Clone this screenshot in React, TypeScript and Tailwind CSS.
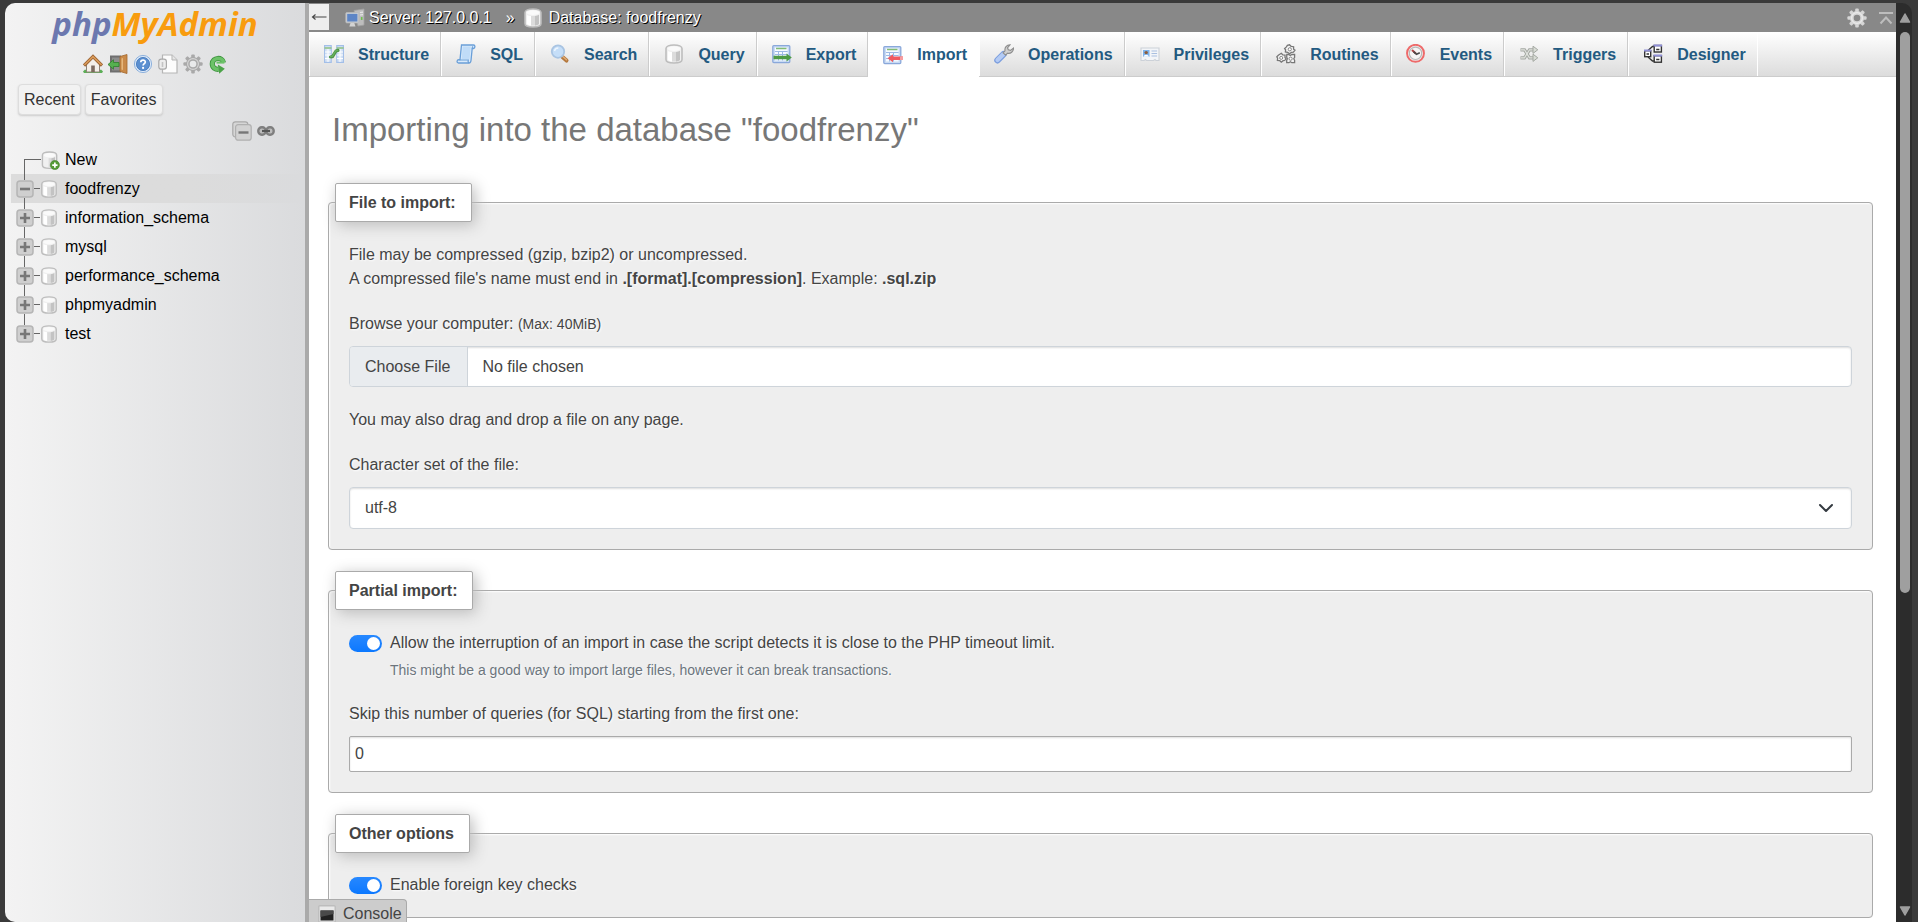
import type { ReactNode } from "react";

type IconProps = { className?: string };

function Svg({ className = "size-5", children }: { className?: string; children: ReactNode }) {
  return (
    <svg viewBox="0 0 20 20" className={`shrink-0 ${className}`} fill="none" aria-hidden="true">
      {children}
    </svg>
  );
}

function DatabaseIcon({ className }: IconProps) {
  return (
    <Svg className={className}>
      <path d="M2 4.500v11c0 2.200 3.400 3.500 8 3.500s8-1.300 8-3.500v-11C18 2.200 14.600 1 10 1S2 2.200 2 4.500z" fill="#f0f0f0" stroke="#bdbdbd" strokeWidth="1.600" />
      <path d="M4 7v9c1 .9 2.300 1.300 4 1.400V8.100C6.500 8 5 7.600 4 7z" fill="#fff" />
      <path d="M8 8v9.500h5.500V8z" fill="#dcdcdc" />
      <path d="M12 8v9.500c1.800-.2 3.400-.7 4-1.500V6.800c-1 .7-2.400 1.100-4 1.200z" fill="#c3c3c3" />
      <ellipse cx="10" cy="4.600" rx="6.400" ry="2.300" fill="#fafafa" />
    </Svg>
  );
}

function NewDatabaseIcon({ className }: IconProps) {
  return (
    <svg viewBox="0 0 20 20" className={`shrink-0 ${className}`} fill="none" aria-hidden="true">
      <path d="M1.500 4.300V15c0 2.200 3.200 3.300 7.500 3.300s7.500-1.100 7.500-3.300V4.300C16.500 2.100 13.300 1 9 1S1.500 2.100 1.500 4.300z" fill="#f0f0f0" stroke="#bdbdbd" strokeWidth="1.500" />
      <path d="M8 7.500v9.500h3.500V7.500z" fill="#dcdcdc" />
      <path d="M11 7.500v9.500c1.800-.2 3.200-.7 3.800-1.500V6.300c-.9.700-2.200 1.100-3.800 1.200z" fill="#c3c3c3" />
      <ellipse cx="9" cy="4.400" rx="6" ry="2.200" fill="#fafafa" />
      <circle cx="14.600" cy="14.800" r="4.800" fill="#559a36" stroke="#3f7d26" strokeWidth=".6" />
      <path d="M14.600 12v5.600M11.800 14.800h5.600" stroke="#fff" strokeWidth="1.800" />
    </svg>
  );
}

function GearIcon({ className, fill = "#a9a9a9", hole = "#e9eaeb" }: IconProps & { fill?: string; hole?: string }) {
  return (
    <Svg className={className}>
      <g fill={fill}>
        <rect x="8.200" y=".4" width="3.600" height="19.200" rx="1" />
        <rect x="8.200" y=".4" width="3.600" height="19.200" rx="1" transform="rotate(45 10 10)" />
        <rect x="8.200" y=".4" width="3.600" height="19.200" rx="1" transform="rotate(90 10 10)" />
        <rect x="8.200" y=".4" width="3.600" height="19.200" rx="1" transform="rotate(135 10 10)" />
        <circle cx="10" cy="10" r="7" />
      </g>
      <circle cx="10" cy="10" r="5.400" stroke="#fff" strokeOpacity=".5" strokeWidth="1.200" />
      <circle cx="10" cy="10" r="3.300" fill={hole} />
    </Svg>
  );
}

function HomeIcon() {
  return (
    <Svg>
      <path d="M0 17.500l2-2 3 1.500h10l3-1.500 2 2-1 1.500H1z" fill="#5cae57" />
      <path d="M3.500 9.500L10 4l6.500 5.500V18h-13z" fill="#f4efe9" stroke="#8f8378" strokeWidth="1" />
      <path d="M1 11.500L10 2.600l9 8.900" stroke="#9a6233" strokeWidth="3.200" />
      <path d="M1.400 11L10 2.600l8.600 8.400" stroke="#d99a58" strokeWidth="1.600" />
      <path d="M8.200 11.500h3.600V18H8.200z" fill="#7d6b60" />
    </Svg>
  );
}

function ExitIcon() {
  return (
    <Svg>
      <path d="M2 1.500h11v17H2z" fill="#6f6f6f" />
      <path d="M4 3.500h9v13H4z" fill="#8d8d8d" />
      <path d="M12 2.500L19 .5v19l-7-2z" fill="#c98a49" stroke="#a3672c" strokeWidth=".8" />
      <path d="M13.500 4.500l1.500-.5v12l-1.500-.4z" fill="#e6b77c" />
      <path d="M0 10.500L5.500 5.800v2.700H11v4H5.500v2.700z" fill="#55b04f" stroke="#2e7f2c" strokeWidth=".8" />
    </Svg>
  );
}

function HelpIcon() {
  return (
    <Svg>
      <circle cx="10" cy="10" r="8.600" fill="#dbe8f7" stroke="#8fb2dd" strokeWidth="1" />
      <circle cx="10" cy="10" r="6.600" fill="#5b8fd0" stroke="#3e74b9" strokeWidth=".8" />
      <path d="M7.800 8.200C7.800 5.400 12.400 5.500 12.300 8c0 1.700-2.200 1.700-2.200 3.600" stroke="#fff" strokeWidth="1.700" />
      <circle cx="10.100" cy="13.900" r="1.100" fill="#fff" />
    </Svg>
  );
}

function DocsIcon() {
  return (
    <Svg>
      <path d="M4.500 1h9.500l5 5v13H4.500z" fill="#fcfcfc" stroke="#b5b5b5" strokeWidth="1.200" />
      <path d="M14 1v5h5" fill="#e6e6e6" stroke="#b5b5b5" strokeWidth="1" />
      <rect x=".8" y="5.200" width="7.600" height="10" rx="2.400" fill="#ededed" stroke="#aaa" strokeWidth="1.200" />
      <path d="M4.500 8v5" stroke="#c3c3c3" strokeWidth="1.600" />
    </Svg>
  );
}

function ReloadIcon() {
  return (
    <Svg>
      <path d="M15.500 8.500C14.800 2.800 4.300 3 4.300 10c0 3.700 3.200 5.500 6.200 5.300" stroke="#3f9440" strokeWidth="5.200" />
      <path d="M15.500 8.300C14.800 2.800 4.300 3 4.300 10c0 3.700 3.200 5.500 6.200 5.300" stroke="#6cc268" strokeWidth="3.600" />
      <path d="M9.800 10.500l7 4.200-5.600 5z" fill="#4ba348" />
      <path d="M8.500 8.600h7.900" stroke="#6cc268" strokeWidth="2" />
    </Svg>
  );
}

function CollapseAllIcon() {
  return (
    <Svg>
      <rect x=".8" y=".8" width="15" height="15" rx="2.500" fill="#d6d6d6" stroke="#a9a9a9" strokeWidth="1.200" />
      <rect x="3.600" y="3.600" width="15.600" height="15.600" rx="2.500" fill="#d2d2d2" stroke="#b0b0b0" strokeWidth="1.200" />
      <path d="M6.500 11.500h10" stroke="#777" strokeWidth="2.400" />
    </Svg>
  );
}

function LinkIcon() {
  return (
    <svg viewBox="0 0 18 10" className="h-[10px] w-[18px]" fill="none" aria-hidden="true">
      <rect x="1.300" y="1.300" width="7.400" height="7.400" rx="3.400" fill="#bdbdbd" stroke="#7f7f7f" strokeWidth="2.400" />
      <rect x="9.300" y="1.300" width="7.400" height="7.400" rx="3.400" fill="#bdbdbd" stroke="#7f7f7f" strokeWidth="2.400" />
      <path d="M5 5h8" stroke="#555" strokeWidth="2.200" />
    </svg>
  );
}

function ServerIcon() {
  return (
    <Svg>
      <path d="M9 2.500L19 1v16l-6 1z" fill="#bdbdbd" stroke="#a2a2a2" strokeWidth=".8" />
      <path d="M15 4.500l3-.4M15 7l3-.3" stroke="#e8e8e8" strokeWidth="1.200" />
      <path d="M16.700 9v3" stroke="#6fc04f" strokeWidth="1.600" />
      <rect x=".8" y="4.500" width="13" height="10.400" rx="1" fill="#c9cdd3" stroke="#b7b7b7" strokeWidth=".8" />
      <rect x="2.200" y="5.900" width="10.200" height="7.600" fill="#5d85c6" />
      <path d="M5.500 15h3.800l1.200 3.500H4.300z" fill="#d3d3d3" />
    </Svg>
  );
}

function StructureIcon() {
  return (
    <Svg>
      <rect x=".6" y="1.600" width="6.600" height="16.800" fill="#d5e3f5" stroke="#a3bfe8" strokeWidth="1.200" />
      <rect x="12.800" y="1.600" width="6.600" height="16.800" fill="#d5e3f5" stroke="#a3bfe8" strokeWidth="1.200" />
      <path d="M.5 4h7M12.600 4h7" stroke="#8fc281" strokeWidth="1.600" />
      <path d="M1 8h6M1 11h6M1 14.500h6M13 8h6M13 11h6M13 14.500h6M4 5v13M16 5v13" stroke="#fff" strokeWidth="1" />
      <path d="M6.500 13l2-.4 3.500-5.600 2-.6" stroke="#4b9345" strokeWidth="3.200" strokeLinecap="round" />
      <path d="M6.500 12.700l1.800-.4 3.500-5.400 2-.6" stroke="#67b15d" strokeWidth="1.300" strokeLinecap="round" />
    </Svg>
  );
}

function SqlIcon() {
  return (
    <Svg>
      <path d="M5.500 1h12c1.800 0 2 3 0 3.500h-1.300L15 16.500c-.2 2-1 2.500-2 2.500H2.500c-2 0-2-3.400.5-3.400h1z" fill="#d9eafb" stroke="#6a9fd8" strokeWidth="1.300" />
      <path d="M6.800 2.500h8L13.500 15H5.600z" fill="#c0dcf8" />
      <path d="M2.500 16h9.800c-.4 1 0 2.500.7 3" stroke="#6a9fd8" strokeWidth="1.200" />
      <path d="M16.200 4.500l.4-2.200" stroke="#6a9fd8" />
    </Svg>
  );
}

function SearchIcon() {
  return (
    <Svg>
      <path d="M12.500 13l4 3.600" stroke="#b5793f" strokeWidth="4" strokeLinecap="round" />
      <path d="M13 12.700l3.500 3.100" stroke="#e0ae78" strokeWidth="1.400" strokeLinecap="round" />
      <circle cx="8" cy="7.600" r="6.200" fill="#c5def8" stroke="#a9c4e2" strokeWidth="1.800" />
      <path d="M4.500 7c.4-2 2-3 3.800-3" stroke="#eef6fe" strokeWidth="1.400" />
    </Svg>
  );
}

function SheetIcon() {
  return (
    <>
      <rect x=".8" y="1.600" width="17" height="17" rx="1" fill="#c9dbf4" stroke="#8aa8da" strokeWidth="1.300" />
      <path d="M3 3.500h12.600v13H3z" fill="#f6faff" />
      <path d="M4 4.500h10.500" stroke="#83bb74" strokeWidth="1.500" />
      <path d="M3 7.500h12.600M3 10.500h12.600M3 13.500h12.600M6.500 7v9.500M10.500 7v9.500" stroke="#9db9e4" strokeWidth="1" />
    </>
  );
}

function ExportIcon() {
  return (
    <Svg>
      <SheetIcon />
      <path d="M1.500 11.800h13V9.500l5.300 4-5.300 4v-2.300h-13z" fill="#4e9b45" />
    </Svg>
  );
}

function ImportIcon() {
  return (
    <Svg>
      <SheetIcon />
      <path d="M20 11.500h-10V9.200l-5.500 4.100 5.500 4v-2.300h10z" fill="#f05a5f" />
      <path d="M20 11.500h-3v3.500h3z" fill="#f79c9f" />
    </Svg>
  );
}

function WrenchIcon() {
  return (
    <Svg>
      <path d="M3.500 16.200l6-6" stroke="#7c9ede" strokeWidth="6.500" strokeLinecap="round" />
      <path d="M3.500 16l5.800-5.800" stroke="#b4cbf4" strokeWidth="4.200" strokeLinecap="round" />
      <path d="M9 8.800l2-2c-.6-3 1.600-6 5-6l-2.500 3 .8 2 2.200.6 3-2.400c.2 3.500-3 6-6 5.200l-1.800 2z" fill="#cfcfcf" stroke="#8d8d8d" strokeWidth="1.100" />
    </Svg>
  );
}

function PrivilegesIcon() {
  return (
    <Svg>
      <path d="M1 4h18v12.500h-3l-1-1-1.500 1h-7l-1-1-1.500 1H1z" fill="#f3f5f8" stroke="#ccd1d8" strokeWidth="1.100" />
      <rect x="3" y="6" width="6.500" height="6.800" fill="#7db2ea" />
      <circle cx="6.200" cy="8.600" r="1.700" fill="#8d5d3b" />
      <path d="M3.500 12.800c.4-2.800 5-2.800 5.400 0z" fill="#fff" />
      <path d="M11.500 7h5.600M11.500 9.500h5.600M11.500 12h5.600" stroke="#a9bfe0" strokeWidth="1.200" />
    </Svg>
  );
}

function RoutinesIcon() {
  return (
    <Svg>
      <g stroke="#777" strokeWidth="1.300" fill="#f3f3f3">
        <path d="M13.500 .8l1.600 1.500 2.500.4v2.500l1.400 1-1.600 2-2 .2-1.900 1.400-1.800-1.400-2.300-.4.200-2.200-1-1.300 1.800-1.600 1-1.500z" />
        <path d="M5.300 9.300l1.500 1.600 2.200.2v2.400l1 1.300-1.200 1.500-2 .6-1.500 1.300-1.500-1.500-2.400-.3.200-2.200-.8-1.400 1.500-1.500z" />
        <path d="M10.800 10.500h2l1.400 1 1.800-1h2.600v2.800l-.8 1.400.8 1.600v2.400h-2.800l-1.400-.9-1.500.9h-2.200v-2.500l.7-1.500-.7-1.500z" />
      </g>
      <g fill="#fff" stroke="#888">
        <circle cx="13.800" cy="5.300" r="1.600" />
        <circle cx="5.200" cy="13.900" r="1.500" />
        <circle cx="14.600" cy="14.700" r="1.600" />
      </g>
    </Svg>
  );
}

function EventsIcon() {
  return (
    <Svg>
      <circle cx="9.500" cy="9.300" r="8.500" fill="#ededed" stroke="#ee6a6a" strokeWidth="1.900" />
      <circle cx="9.500" cy="9.300" r="6.200" fill="#f6f6f6" stroke="#b9b9b9" strokeWidth="1.200" />
      <path d="M9.800 9.600L6 6" stroke="#b14141" strokeWidth="2" />
      <path d="M7.500 7.600l3 2.600 3.300-1.400" stroke="#4a4a4a" strokeWidth="1.700" />
    </Svg>
  );
}

function TriggersIcon() {
  return (
    <Svg>
      <g stroke="#a4a8a2" strokeWidth="3.200">
        <path d="M1.500 5.800h4l5 8h4.500" />
        <path d="M1.500 13.800h4l5-8h4.500" />
      </g>
      <g stroke="#dfe2dd" strokeWidth="1.200">
        <path d="M2 5.800h3.500l5 8h4.500" />
        <path d="M2 13.800h3.500l5-8h4.500" />
      </g>
      <path d="M14 2.200l4.800 3.600-4.800 3.600zM14 10.200l4.800 3.600-4.800 3.600z" fill="#d8dcd5" stroke="#a4a8a2" strokeWidth="1" />
    </Svg>
  );
}

function DesignerIcon() {
  return (
    <Svg>
      <path d="M5 6.500l4.500-4h3M5 13l4.500 4h3" stroke="#333" strokeWidth="1.300" />
      <g fill="#fff" stroke="#333" strokeWidth="1.400">
        <rect x="1.700" y="6.700" width="6" height="6" />
        <rect x="11.200" y="1.500" width="7.200" height="6.500" />
        <rect x="11.200" y="11.700" width="7.200" height="6.500" />
      </g>
      <path d="M1 6.600h7.400M10.500 1.600h8.600M10.500 11.600h8.600" stroke="#8f8fd6" strokeWidth="2" />
      <path d="M3.500 10h2.500M13.200 5.500h3.200M13.200 15.500h3.200" stroke="#333" strokeWidth="1.600" />
    </Svg>
  );
}

function ConsoleIcon() {
  return (
    <svg viewBox="0 0 18 18" className="size-[18px]" fill="none" aria-hidden="true">
      <rect x=".8" y=".8" width="16.400" height="16.400" rx="1" fill="#e9e9e9" stroke="#bdbdbd" strokeWidth="1.400" />
      <path d="M2.500 5.500h13v10h-13z" fill="#222" />
      <path d="M2.500 5.500h13v3.500L2.500 12z" fill="#4a4a4a" />
    </svg>
  );
}

const quickLinks = [
  { label: "Home", icon: <HomeIcon /> },
  { label: "Log out", icon: <ExitIcon /> },
  { label: "phpMyAdmin documentation", icon: <HelpIcon /> },
  { label: "Documentation", icon: <DocsIcon /> },
  { label: "Navigation panel settings", icon: <GearIcon /> },
  { label: "Reload navigation panel", icon: <ReloadIcon /> },
];

const databases = ["foodfrenzy", "information_schema", "mysql", "performance_schema", "phpmyadmin", "test"];

const tabs = [
  { label: "Structure", icon: <StructureIcon /> },
  { label: "SQL", icon: <SqlIcon /> },
  { label: "Search", icon: <SearchIcon /> },
  { label: "Query", icon: <DatabaseIcon className="size-5" /> },
  { label: "Export", icon: <ExportIcon /> },
  { label: "Import", icon: <ImportIcon /> },
  { label: "Operations", icon: <WrenchIcon /> },
  { label: "Privileges", icon: <PrivilegesIcon /> },
  { label: "Routines", icon: <RoutinesIcon /> },
  { label: "Events", icon: <EventsIcon /> },
  { label: "Triggers", icon: <TriggersIcon /> },
  { label: "Designer", icon: <DesignerIcon /> },
];

function Sidebar() {
  return (
    <aside className="flex w-[304px] shrink-0 flex-col rounded-l-[10px] border-r-4 border-[#aaa] bg-linear-to-r from-[#f3f3f3] to-[#dadbdd]">
      <a href="#home" className="mt-[2px] self-center font-['Open_Sans',sans-serif] text-[33px] leading-[38px] font-bold italic">
        <span className="text-[#6c78af]">php</span>
        <span className="text-[#f89c0e]">MyAdmin</span>
      </a>
      <nav aria-label="Shortcuts" className="mt-[11px] flex gap-[5px] pl-[78px]">
        {quickLinks.map((link) => (
          <a key={link.label} href="#nav" aria-label={link.label}>
            {link.icon}
          </a>
        ))}
      </nav>
      <div className="mt-[10px] flex gap-1 pl-[13px]">
        {["Recent", "Favorites"].map((label) => (
          <button
            key={label}
            type="button"
            className="h-[31px] rounded-sm border border-[#ddd] bg-[#f2f2f2] px-[5px] text-[#333] shadow-[0_1px_2px_#ccc]"
          >
            {label}
          </button>
        ))}
      </div>
      <div className="mt-[6px] mr-[30px] flex items-center justify-end gap-[5px]">
        <button type="button" aria-label="Collapse all">
          <CollapseAllIcon />
        </button>
        <button type="button" aria-label="Unlink from main panel">
          <LinkIcon />
        </button>
      </div>
      <ul className="mt-[5px] text-black">
        <li className="flex h-7 items-center pl-[19px]">
          <span className="mt-[13px] h-4 w-[17px] shrink-0 border-t border-l border-[#666]" />
          <NewDatabaseIcon className="size-[19px]" />
          <a href="#new" className="ml-[5px]">
            New
          </a>
        </li>
        {databases.map((name, index) => (
          <li
            key={name}
            className={`ml-[6px] flex h-[29px] items-center pl-[5px] ${index === 0 ? "bg-linear-to-r from-[#dcdcdc] from-60% to-[#dadbdd]" : ""}`}
          >
            <span className="flex h-full w-[18px] shrink-0 flex-col items-center">
              <span className="mr-px w-px flex-1 bg-[#666]" />
              <button type="button" aria-label={index === 0 ? `Collapse ${name}` : `Expand ${name}`}>
                <svg viewBox="0 0 18 18" className="block size-[18px]" fill="none" aria-hidden="true">
                  <rect x="1" y="1" width="16" height="16" rx="3" fill="#cfcfcf" stroke="#b5b5b5" strokeWidth="1.500" />
                  <path d={index === 0 ? "M4 9h10" : "M4 9h10M9 4v10"} stroke="#777" strokeWidth="2.600" />
                </svg>
              </button>
              <span className={`mr-px w-px flex-1 ${index < databases.length - 1 ? "bg-[#666]" : ""}`} />
            </span>
            <span className="h-px w-[6px] shrink-0 bg-[#666]" />
            <DatabaseIcon className="size-[18px]" />
            <a href="#database" className="ml-[7px]">
              {name}
            </a>
          </li>
        ))}
      </ul>
    </aside>
  );
}

function TopBar() {
  return (
    <header className="flex h-[29px] items-center bg-[#888] text-white">
      <button type="button" aria-label="Hide navigation panel" className="mb-px flex h-[26px] w-5 items-center justify-center bg-[#eee]">
        <svg viewBox="0 0 16 10" className="h-[10px] w-4" fill="none" aria-hidden="true">
          <path d="M15.500 5H1.500M4.500 2.500L1.500 5l3 2.500" stroke="#444" strokeWidth="1.100" />
        </svg>
      </button>
      <nav aria-label="Breadcrumb" className="flex items-center [text-shadow:1px_1px_0_#000]">
        <a href="#server" className="ml-4 flex items-center gap-1">
          <ServerIcon />
          Server: 127.0.0.1
        </a>
        <span className="ml-[14px]">»</span>
        <a href="#database" className="ml-2 flex items-center gap-[6px]">
          <DatabaseIcon className="size-5" />
          Database: foodfrenzy
        </a>
      </nav>
      <div className="mr-[3px] ml-auto flex items-center gap-3">
        <a href="#settings" aria-label="Page-related settings">
          <GearIcon className="size-5" fill="#d6d6d6" hole="#888" />
        </a>
        <a href="#top" aria-label="Scroll to top">
          <svg viewBox="0 0 14 14" className="size-[14px]" fill="none" stroke="#bdbdbd" strokeWidth="2" aria-hidden="true">
            <path d="M0 2h14M1.500 12.500L7 6.500l5.500 6" />
          </svg>
        </a>
      </div>
    </header>
  );
}

function TabBar() {
  return (
    <nav aria-label="Database" className="flex h-[45px] border-b border-[#ccc] bg-linear-to-b from-white to-[#dcdcdc] font-bold text-[#235a81]">
      {tabs.map((tab) => (
        <a
          key={tab.label}
          href="#tab"
          aria-current={tab.label === "Import" ? "page" : undefined}
          className={`flex items-center gap-[14px] border-l border-l-white pr-[11px] pl-[14px] ${
            tab.label === "Import" ? "-mb-px border-r border-r-white bg-white" : tab.label === "Designer" ? "border-r border-r-white" : "border-r border-r-[#ccc]"
          }`}
        >
          {tab.icon}
          <span className="pt-px">{tab.label}</span>
        </a>
      ))}
    </nav>
  );
}

function Panel({ title, children }: { title: string; children: ReactNode }) {
  return (
    <fieldset className="rounded border border-[#aaa] bg-[#eee] px-5 pb-5 shadow-[inset_1px_1px_2px_#fff] [text-shadow:1px_1px_2px_#fff]">
      <legend className="-ml-[14px] rounded-xs border border-[#aaa] bg-white py-[7px] pr-[15px] pl-[13px] leading-[23px] font-bold shadow-[3px_3px_15px_#bbb]">
        {title}
      </legend>
      {children}
    </fieldset>
  );
}

function Switch({ id, label }: { id: string; label: string }) {
  return (
    <div className="flex items-center gap-2">
      <input
        id={id}
        type="checkbox"
        role="switch"
        defaultChecked
        className="flex h-[17px] w-[33px] shrink-0 appearance-none items-center rounded-full bg-[#ccc] px-[2px] before:size-[13px] before:rounded-full before:bg-white checked:justify-end checked:bg-linear-to-b checked:from-[#2688ff] checked:to-[#0a78ff]"
      />
      <label htmlFor={id}>{label}</label>
    </div>
  );
}

function ImportForm() {
  return (
    <form className="flex flex-col gap-[21px] pt-5 pr-[23px] pl-[19px]">
      <Panel title="File to import:">
        <p className="mt-[21px]">
          File may be compressed (gzip, bzip2) or uncompressed.
          <br />
          A compressed file's name must end in <b>.[format].[compression]</b>. Example: <b>.sql.zip</b>
        </p>
        <label htmlFor="import-file" className="mt-[21px] block">
          Browse your computer: <small className="text-sm leading-none">(Max: 40MiB)</small>
        </label>
        <input
          id="import-file"
          type="file"
          className="mt-[10px] block h-[41px] w-full rounded border border-[#ced4da] bg-white leading-6 shadow-[inset_0_1px_2px_#ddd] file:mr-[14px] file:h-full file:border-r file:border-[#ced4da] file:bg-[#e9ecef] file:pr-[17px] file:pl-[15px] file:text-[#444]"
        />
        <p className="mt-[21px]">You may also drag and drop a file on any page.</p>
        <label htmlFor="charset" className="mt-[21px] block">
          Character set of the file:
        </label>
        <div className="relative mt-[10px]">
          <select
            id="charset"
            defaultValue="utf-8"
            className="block h-[42px] w-full appearance-none rounded border border-[#ced4da] bg-white px-[15px] shadow-[inset_0_1px_2px_#ddd]"
          >
            <option>utf-8</option>
            <option>iso-8859-1</option>
          </select>
          <svg viewBox="0 0 16 16" className="pointer-events-none absolute top-[13px] right-[18px] size-4" fill="none" aria-hidden="true">
            <path d="M2 5l6 6 6-6" stroke="#343a40" strokeWidth="2" strokeLinecap="round" strokeLinejoin="round" />
          </svg>
        </div>
      </Panel>

      <Panel title="Partial import:">
        <div className="mt-[21px]">
          <Switch id="allow-interrupt" label="Allow the interruption of an import in case the script detects it is close to the PHP timeout limit." />
        </div>
        <p className="mt-1 ml-[41px] text-sm leading-[22px] text-[#6c757d]">
          This might be a good way to import large files, however it can break transactions.
        </p>
        <label htmlFor="skip-queries" className="mt-[21px] block">
          Skip this number of queries (for SQL) starting from the first one:
        </label>
        <input
          id="skip-queries"
          type="text"
          inputMode="numeric"
          defaultValue="0"
          className="mt-[10px] block h-[36px] w-full rounded-xs border border-[#aaa] bg-white px-[5px] shadow-[inset_0_1px_2px_#ddd]"
        />
      </Panel>

      <Panel title="Other options">
        <div className="mt-5">
          <Switch id="foreign-keys" label="Enable foreign key checks" />
        </div>
      </Panel>
    </form>
  );
}

function ScrollTrack() {
  return (
    <div aria-hidden="true" className="flex w-4 shrink-0 flex-col items-center rounded-tr-[10px] bg-[#2c2c2c] pt-[9px] pb-[5px] pl-[2px]">
      <svg viewBox="0 0 12 12" className="size-3 shrink-0">
        <path d="M6 2l4.500 8h-9z" fill="#9f9f9f" stroke="#9f9f9f" strokeLinejoin="round" strokeWidth="1.500" />
      </svg>
      <div className="flex w-full flex-1 flex-col items-center pt-2 pb-[10px]">
        <div className="h-[65%] w-[10px] rounded-full bg-[#9f9f9f]" />
      </div>
      <svg viewBox="0 0 12 12" className="size-3 shrink-0">
        <path d="M6 10l4.500-8h-9z" fill="#9f9f9f" stroke="#9f9f9f" strokeLinejoin="round" strokeWidth="1.500" />
      </svg>
    </div>
  );
}

export default function App() {
  return (
    <div className="flex h-screen overflow-hidden bg-[#3a3a3a] pt-[3px] pr-[6px] pl-[5px] font-['Liberation_Sans',Arial,sans-serif] text-base leading-6 text-[#444]">
      <Sidebar />
      <main className="relative flex min-w-0 flex-1 flex-col overflow-hidden bg-white">
        <TopBar />
        <TabBar />
        <h1 className="mt-8 ml-[23px] text-[33px] leading-[42px] text-[#777]">Importing into the database "foodfrenzy"</h1>
        <div className="mt-3">
          <ImportForm />
        </div>
        <button
          type="button"
          className="absolute bottom-0 left-0 flex h-[23px] items-center gap-[7px] overflow-hidden rounded-tr border-t border-r border-[#aaa] bg-[#ccc] pt-[6px] pr-1 pl-[9px]"
        >
          <ConsoleIcon />
          Console
        </button>
      </main>
      <ScrollTrack />
    </div>
  );
}
